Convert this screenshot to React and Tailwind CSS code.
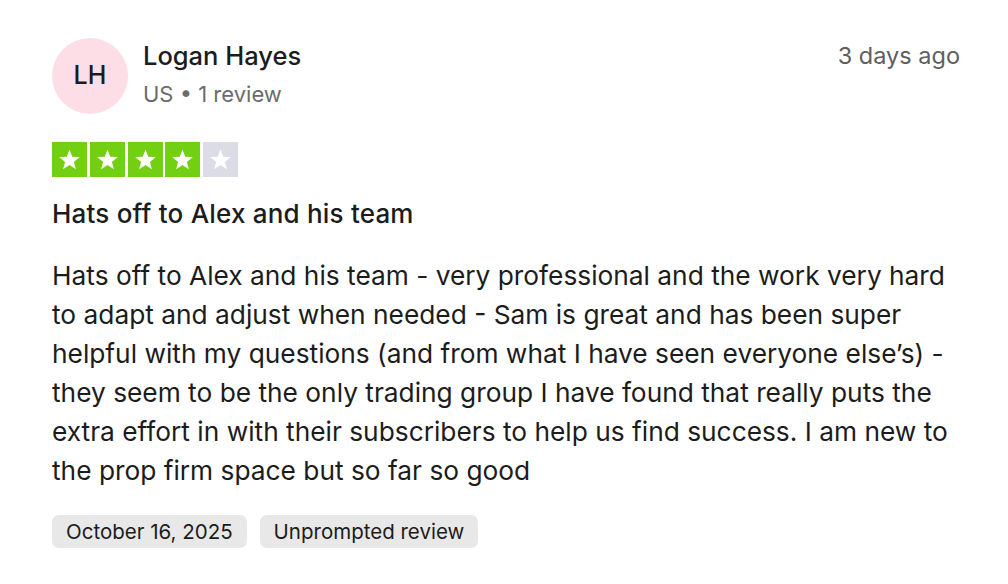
const lines = [
  "Hats off to Alex and his team - very professional and the work very hard",
  "to adapt and adjust when needed - Sam is great and has been super",
  "helpful with my questions (and from what I have seen everyone else’s) -",
  "they seem to be the only trading group I have found that really puts the",
  "extra effort in with their subscribers to help us find success. I am new to",
  "the prop firm space but so far so good",
];

function Star({ filled }) {
  return (
    <div
      className={
        "flex h-[35px] w-[35px] items-center justify-center " +
        (filled ? "bg-[#73cf11]" : "bg-[#dcdce6]")
      }
    >
      <svg viewBox="0 0 24 24" className="h-[25px] w-[25px]" fill="#ffffff">
        <path d="M12 2.5l2.6 6.9 7.3.3-5.7 4.6 2 7.1L12 17.3l-6.2 4.1 2-7.1-5.7-4.6 7.3-.3z" />
      </svg>
    </div>
  );
}

export default function App() {
  return (
    <div className="min-h-[584px] w-[1008px] bg-white font-['Inter',sans-serif] text-[#1c1c1c]">
      <div className="pl-[52px] pr-[48px] pt-[38px]">
        <div className="flex items-start justify-between">
          <div className="flex items-start gap-[15px]">
            <div className="flex h-[76px] w-[76px] items-center justify-center rounded-full bg-[#fddde6] text-[25px] font-medium">
              LH
            </div>
            <div className="pt-[1px]">
              <div className="text-[25.5px] font-medium leading-[34px]">Logan Hayes</div>
              <div className="mt-[7px] text-[22px] leading-[28px] text-[#6b6b6b]">
                US • 1 review
              </div>
            </div>
          </div>
          <div className="pt-[1px] text-[23.5px] leading-[34px] text-[#5e5e5e]">3 days ago</div>
        </div>

        <div className="mt-[28px] flex gap-[2.75px]">
          <Star filled />
          <Star filled />
          <Star filled />
          <Star filled />
          <Star />
        </div>

        <h2 className="mt-[20px] text-[26px] font-medium leading-[34px] tracking-[0.2px]">
          Hats off to Alex and his team
        </h2>

        <p className="mt-[25px] text-[26.3px] leading-[39px]">
          {lines.map((l, i) => (
            <span key={i} className="block whitespace-nowrap">
              {l}
            </span>
          ))}
        </p>

        <div className="mt-[25px] flex gap-[13px]">
          <span className="rounded-[7px] bg-[#e8e8e8] px-[14px] py-[4px] text-[20.5px] leading-[25px]">
            October 16, 2025
          </span>
          <span className="rounded-[7px] bg-[#e8e8e8] px-[14px] py-[4px] text-[20.5px] leading-[25px]">
            Unprompted review
          </span>
        </div>
      </div>
    </div>
  );
}
